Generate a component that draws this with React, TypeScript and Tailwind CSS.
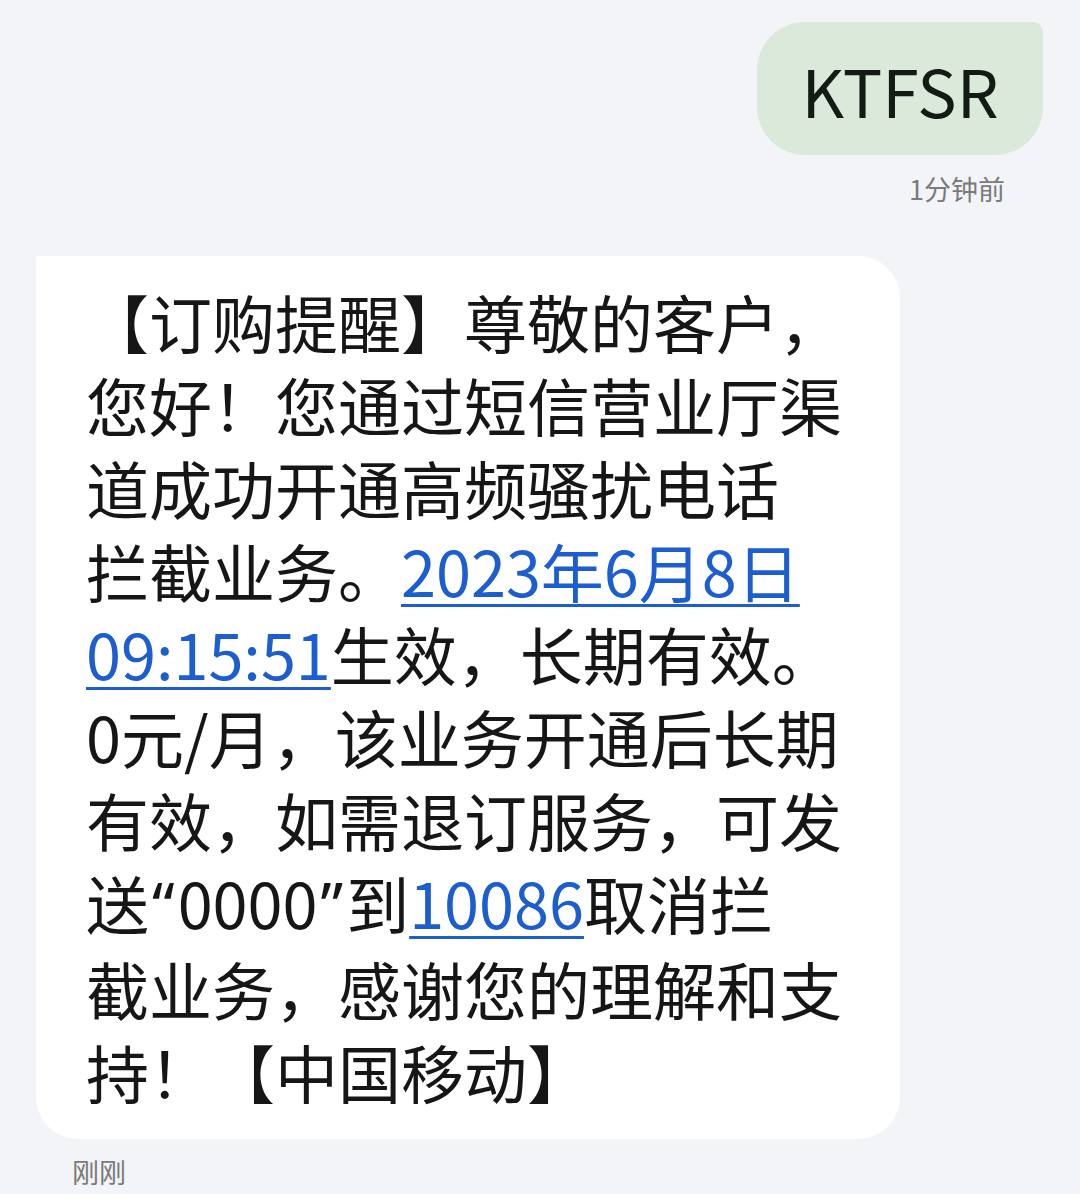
import React from 'react';

const Link: React.FC<{ children: React.ReactNode }> = ({ children }) => (
  <span className="text-[#1c5ecf] underline decoration-[3px] underline-offset-[7px]">{children}</span>
);

const Q: React.FC<{ children: React.ReactNode }> = ({ children }) => (
  <span className="mx-[3px] font-['Noto_Sans',sans-serif]">{children}</span>
);

const lines: React.ReactNode[] = [
  '【订购提醒】尊敬的客户，',
  '您好！您通过短信营业厅渠',
  '道成功开通高频骚扰电话',
  <>拦截业务。<Link>2023年6月8日</Link></>,
  <><Link>09:15:51</Link>生效，长期有效。</>,
  '0元/月，该业务开通后长期',
  '有效，如需退订服务，可发',
  <>送<Q>“</Q>0000<Q>”</Q>到<Link>10086</Link>取消拦</>,
  '截业务，感谢您的理解和支',
  '持！【中国移动】',
];

export default function App() {
  return (
    <div className="min-h-[1194px] w-[1080px] bg-[#f3f4f7] font-['Noto_Sans_CJK_SC','Noto_Sans',sans-serif] text-[#161616]">
      {/* sent */}
      <div className="flex flex-col items-end pt-[22px] pr-[37px]">
        <div className="flex h-[133px] w-[286px] items-center justify-center rounded-[48px] rounded-tr-[10px] bg-[#dbe9db] text-[66px] leading-none text-[#141a14]">
          KTFSR
        </div>
        <div className="mt-[16px] mr-[38px] text-[27px] leading-[36px] text-[#7a7a7a]">1分钟前</div>
      </div>

      {/* received */}
      <div className="mt-[49px] pl-[36px]">
        <div className="w-[864px] rounded-[42px] rounded-tl-none bg-white pt-[23px] pb-[27px] pl-[50px] text-[63px] leading-[83px]">
          {lines.map((l, i) => (
            <div key={i} className="whitespace-nowrap">{l}</div>
          ))}
        </div>
        <div className="mt-[15px] pl-[36px] text-[27px] leading-[36px] text-[#7a7a7a]">刚刚</div>
      </div>
    </div>
  );
}
